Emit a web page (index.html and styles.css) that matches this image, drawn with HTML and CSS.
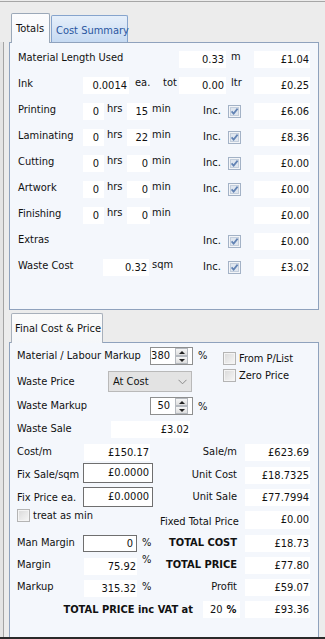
FILE: index.html
```html
<!DOCTYPE html>
<html>
<head>
<meta charset="utf-8">
<link rel="stylesheet" href="styles.css">
</head>
<body>
<div class="window">
  <div class="side"></div>
  <div class="main">
    <div class="tabs">
      <div class="tab sel">Totals</div>
      <div class="tab alt">Cost Summary</div>
    </div>
    <div class="panel p1">
      <div class="row">
        <div class="lbl w161">Material Length Used</div>
        <div class="box w47">0.33</div>
        <div class="unit w28">m</div>
        <div class="box price">£1.04</div>
      </div>
      <div class="row">
        <div class="lbl w65">Ink</div>
        <div class="box w46">0.0014</div>
        <div class="unit w34 pl6">ea.</div>
        <div class="unit w16">tot</div>
        <div class="box w47">0.00</div>
        <div class="unit w28">ltr</div>
        <div class="box price">£0.25</div>
      </div>
      <div class="row">
        <div class="lbl w65">Printing</div>
        <div class="box hb">0</div>
        <div class="unit hrs">hrs</div>
        <div class="box mb">15</div>
        <div class="unit mins">min</div>
        <div class="unit inc">Inc.</div>
        <svg class="cb" viewBox="0 0 13 13"><rect x=".5" y=".5" width="12" height="12" fill="#f3f5f8" stroke="#a3b2c6"/><rect x="2.5" y="2.5" width="8" height="8" fill="#dfe6ef" stroke="#c3cedc"/><path d="M3.6 6.4 L5.6 8.6 L9.6 3.6" fill="none" stroke="#6283b4" stroke-width="1.7"/></svg>
        <div class="box price">£6.06</div>
      </div>
      <div class="row">
        <div class="lbl w65">Laminating</div>
        <div class="box hb">0</div>
        <div class="unit hrs">hrs</div>
        <div class="box mb">22</div>
        <div class="unit mins">min</div>
        <div class="unit inc">Inc.</div>
        <svg class="cb" viewBox="0 0 13 13"><rect x=".5" y=".5" width="12" height="12" fill="#f3f5f8" stroke="#a3b2c6"/><rect x="2.5" y="2.5" width="8" height="8" fill="#dfe6ef" stroke="#c3cedc"/><path d="M3.6 6.4 L5.6 8.6 L9.6 3.6" fill="none" stroke="#6283b4" stroke-width="1.7"/></svg>
        <div class="box price">£8.36</div>
      </div>
      <div class="row">
        <div class="lbl w65">Cutting</div>
        <div class="box hb">0</div>
        <div class="unit hrs">hrs</div>
        <div class="box mb">0</div>
        <div class="unit mins">min</div>
        <div class="unit inc">Inc.</div>
        <svg class="cb" viewBox="0 0 13 13"><rect x=".5" y=".5" width="12" height="12" fill="#f3f5f8" stroke="#a3b2c6"/><rect x="2.5" y="2.5" width="8" height="8" fill="#dfe6ef" stroke="#c3cedc"/><path d="M3.6 6.4 L5.6 8.6 L9.6 3.6" fill="none" stroke="#6283b4" stroke-width="1.7"/></svg>
        <div class="box price">£0.00</div>
      </div>
      <div class="row">
        <div class="lbl w65">Artwork</div>
        <div class="box hb">0</div>
        <div class="unit hrs">hrs</div>
        <div class="box mb">0</div>
        <div class="unit mins">min</div>
        <div class="unit inc">Inc.</div>
        <svg class="cb" viewBox="0 0 13 13"><rect x=".5" y=".5" width="12" height="12" fill="#f3f5f8" stroke="#a3b2c6"/><rect x="2.5" y="2.5" width="8" height="8" fill="#dfe6ef" stroke="#c3cedc"/><path d="M3.6 6.4 L5.6 8.6 L9.6 3.6" fill="none" stroke="#6283b4" stroke-width="1.7"/></svg>
        <div class="box price">£0.00</div>
      </div>
      <div class="row">
        <div class="lbl w65">Finishing</div>
        <div class="box hb">0</div>
        <div class="unit hrs">hrs</div>
        <div class="box mb">0</div>
        <div class="unit mins">min</div>
        <div class="spacer51"></div>
        <div class="box price">£0.00</div>
      </div>
      <div class="row">
        <div class="lbl w185">Extras</div>
        <div class="unit inc">Inc.</div>
        <svg class="cb" viewBox="0 0 13 13"><rect x=".5" y=".5" width="12" height="12" fill="#f3f5f8" stroke="#a3b2c6"/><rect x="2.5" y="2.5" width="8" height="8" fill="#dfe6ef" stroke="#c3cedc"/><path d="M3.6 6.4 L5.6 8.6 L9.6 3.6" fill="none" stroke="#6283b4" stroke-width="1.7"/></svg>
        <div class="box price">£0.00</div>
      </div>
      <div class="row">
        <div class="lbl w85">Waste Cost</div>
        <div class="box w46">0.32</div>
        <div class="unit sqm">sqm</div>
        <div class="unit inc">Inc.</div>
        <svg class="cb" viewBox="0 0 13 13"><rect x=".5" y=".5" width="12" height="12" fill="#f3f5f8" stroke="#a3b2c6"/><rect x="2.5" y="2.5" width="8" height="8" fill="#dfe6ef" stroke="#c3cedc"/><path d="M3.6 6.4 L5.6 8.6 L9.6 3.6" fill="none" stroke="#6283b4" stroke-width="1.7"/></svg>
        <div class="box price">£3.02</div>
      </div>
    </div>

    <div class="tabs t2">
      <div class="tab sel fc">Final Cost &amp; Price</div>
    </div>
    <div class="panel p2">
      <div class="top">
        <div class="tleft">
          <div class="r r1">
            <div class="lbl w133">Material / Labour Markup</div>
            <div class="spin"><span class="sv">380</span><span class="btns"><span class="b up"></span><span class="b dn"></span></span></div>
            <div class="unit pct">%</div>
          </div>
          <div class="r r2">
            <div class="lbl w91">Waste Price</div>
            <div class="combo"><span>At Cost</span><svg class="chev" viewBox="0 0 9 6"><path d="M0.5 0.8 L4.5 4.8 L8.5 0.8" fill="none" stroke="#8a8a8a" stroke-width="1"/></svg></div>
          </div>
          <div class="r r3">
            <div class="lbl w133">Waste Markup</div>
            <div class="spin"><span class="sv">50</span><span class="btns"><span class="b up"></span><span class="b dn"></span></span></div>
            <div class="unit pct">%</div>
          </div>
          <div class="r r4">
            <div class="lbl w94">Waste Sale</div>
            <div class="box ws">£3.02</div>
          </div>
        </div>
        <div class="tright">
          <div class="chk"><span class="cb0"></span>From P/List</div>
          <div class="chk"><span class="cb0"></span>Zero Price</div>
        </div>
      </div>

      <div class="lrow h23">
        <div class="lp">
          <div class="lbl w66">Cost/m</div>
          <div class="box cm">£150.17</div>
        </div>
        <div class="rp">
          <div class="rl">Sale/m</div>
          <div class="box rb">£623.69</div>
        </div>
      </div>
      <div class="lrow h22">
        <div class="lp">
          <div class="lbl w66">Fix Sale/sqm</div>
          <div class="ed fx">£0.0000</div>
        </div>
        <div class="rp">
          <div class="rl">Unit Cost</div>
          <div class="box rb">£18.7325</div>
        </div>
      </div>
      <div class="lrow h24">
        <div class="lp">
          <div class="lbl w66">Fix Price ea.</div>
          <div class="ed fx">£0.0000</div>
        </div>
        <div class="rp">
          <div class="rl">Unit Sale</div>
          <div class="box rb">£77.7994</div>
        </div>
      </div>
      <div class="lrow h22 r8">
        <div class="lp">
          <div class="chk tam"><span class="cb0"></span>treat as min</div>
        </div>
        <div class="rp">
          <div class="rl">Fixed Total Price</div>
          <div class="box rb">£0.00</div>
        </div>
      </div>
      <div class="lrow h22">
        <div class="lp">
          <div class="lbl w66">Man Margin</div>
          <div class="ed mm">0</div>
          <div class="unit pc2">%</div>
        </div>
        <div class="rp">
          <div class="rl bold">TOTAL COST</div>
          <div class="box rb">£18.73</div>
        </div>
      </div>
      <div class="lrow h22">
        <div class="lp">
          <div class="lbl w66">Margin</div>
          <div class="box mg">75.92</div>
          <div class="unit pc2 sup">%</div>
        </div>
        <div class="rp">
          <div class="rl bold">TOTAL PRICE</div>
          <div class="box rb">£77.80</div>
        </div>
      </div>
      <div class="lrow h22">
        <div class="lp">
          <div class="lbl w66">Markup</div>
          <div class="box mg">315.32</div>
          <div class="unit pc2">%</div>
        </div>
        <div class="rp">
          <div class="rl">Profit</div>
          <div class="box rb">£59.07</div>
        </div>
      </div>
      <div class="lrow h22 vat">
        <div class="vl bold">TOTAL PRICE inc VAT at</div>
        <div class="box vb"><span>20</span><b>%</b></div>
        <div class="box rb">£93.36</div>
      </div>
    </div>
  </div>
  <div class="rside"></div>
</div>
</body>
</html>
```
FILE: styles.css
```css
html, body {
  margin: 0;
  padding: 0;
  background: #ececec;
}
body {
  font-family: "DejaVu Sans Condensed", "DejaVu Sans", sans-serif;
  font-stretch: condensed;
  font-size: 11px;
  color: #111;
}
.window {
  margin-top: 1px;
  height: 638px;
  box-sizing: border-box;
  border-top: 1px solid #a6a6a6;
  border-bottom: 2px solid #2a2a2a;
  display: flex;
  background: #ececec;
}
.side {
  width: 3px;
  margin-top: 40px;
  border-right: 1px solid #a4a4a4;
  background: #e4e4e4;
}
.main {
  margin-left: 5px;
  width: 310px;
  display: flex;
  flex-direction: column;
}
.rside {
  flex: 1;
}
.tabs {
  display: flex;
  align-items: flex-end;
  height: 29px;
  margin-top: 11px;
  padding-left: 2px;
}
.tabs.t2 {
  margin-top: 3px;
}
.tab {
  box-sizing: border-box;
  border: 1px solid #9ba8b8;
  border-bottom: none;
  border-radius: 2px 2px 0 0;
  padding-left: 4px;
  white-space: nowrap;
}
.tab.sel {
  width: 39px;
  height: 30px;
  margin-bottom: -1px;
  padding-top: 8px;
  background: linear-gradient(#fcfcfd, #f4f7fc);
  position: relative;
  z-index: 1;
}
.tab.alt {
  width: 77px;
  height: 27px;
  margin-left: 1px;
  padding-top: 8px;
  border-color: #86a4cd;
  background: linear-gradient(#e6effa, #c6daf2);
  color: #2a56a0;
}
.tab.fc {
  width: 92px;
  background: linear-gradient(#fbfbfb, #f5f7fa);
  border-color: #a8b0bb;
  padding-left: 3px;
}
.panel {
  box-sizing: border-box;
  border: 1px solid #8fa2bd;
  background: #f4f7fc;
}
.p1 {
  height: 268px;
  padding: 2px 0 0 8px;
}
.p2 {
  flex: 1;
  border-bottom: none;
  padding: 0 0 0 7px;
}
.row {
  display: flex;
  align-items: flex-start;
  height: 26px;
}
.lbl {
  margin-top: 6px;
  line-height: 14px;
  white-space: nowrap;
  flex-shrink: 0;
}
.unit {
  margin-top: 5px;
  line-height: 14px;
  white-space: nowrap;
  flex-shrink: 0;
}
.box {
  box-sizing: border-box;
  margin-top: 6px;
  height: 17px;
  line-height: 18px;
  background: #fff;
  text-align: right;
  padding-right: 2px;
  white-space: nowrap;
  flex-shrink: 0;
}
.w161 { width: 161px; }
.w65 { width: 65px; }
.w66 { width: 66px; }
.w85 { width: 85px; }
.w185 { width: 185px; }
.w133 { width: 133px; }
.w91 { width: 91px; }
.w94 { width: 94px; }
.w47 { width: 47px; }
.w46 { width: 46px; }
.w28 { width: 28px; padding-left: 5px; box-sizing: border-box; }
.w34 { width: 34px; box-sizing: border-box; }
.w16 { width: 16px; }
.pl6 { padding-left: 6px; }
.hb { width: 21px; padding-right: 5px; }
.mb { width: 23px; padding-right: 2px; }
.hrs { width: 23px; padding-left: 3px; box-sizing: border-box; }
.mins { width: 53px; padding-left: 2px; box-sizing: border-box; }
.sqm { width: 54px; padding-left: 3px; box-sizing: border-box; }
.inc { width: 25px; margin-top: 7px; }
.spacer51 { width: 51px; flex-shrink: 0; }
.cb {
  width: 13px;
  height: 13px;
  margin-top: 8px;
  margin-right: 13px;
  flex-shrink: 0;
}
.price {
  width: 56px;
  padding-right: 1px;
}

/* panel 2 */
.top {
  display: flex;
}
.tleft {
  width: 206px;
}
.r {
  display: flex;
  align-items: flex-start;
}
.r1 { height: 26px; }
.r2 { height: 26px; }
.r3 { height: 23px; }
.r4 { height: 22px; }
.r1 .lbl { margin-top: 6px; }
.r2 .lbl { margin-top: 6px; }
.r3 .lbl { margin-top: 4px; }
.r4 .lbl { margin-top: 4px; }
.spin {
  box-sizing: border-box;
  width: 43px;
  height: 18px;
  margin-top: 4px;
  border: 1px solid #8e8f8f;
  background: #fff;
  display: flex;
  align-items: stretch;
}
.r3 .spin { margin-top: 2px; }
.sv {
  flex: 1;
  text-align: right;
  line-height: 16px;
  padding-right: 5px;
}
.btns {
  width: 13px;
  margin: 0 4px 0 0;
  display: flex;
  flex-direction: column;
}
.b {
  flex: 1;
  box-sizing: border-box;
  border: 1px solid #b5b9bf;
  background: linear-gradient(#f6f6f6, #dedede);
  display: flex;
  align-items: center;
  justify-content: center;
}
.b.up::before {
  content: "";
  border-left: 3px solid transparent;
  border-right: 3px solid transparent;
  border-bottom: 3px solid #222;
}
.b.dn::before {
  content: "";
  border-left: 3px solid transparent;
  border-right: 3px solid transparent;
  border-top: 3px solid #222;
}
.pct { margin-top: 6px; padding-left: 5px; }
.r3 .pct { margin-top: 5px; }
.combo {
  box-sizing: border-box;
  width: 84px;
  height: 21px;
  margin-top: 2px;
  border: 1px solid #b9b9b9;
  background: #e3e3e3;
  display: flex;
  align-items: center;
  justify-content: space-between;
  padding: 0 4px 0 4px;
}
.chev {
  width: 9px;
  height: 6px;
}
.ws {
  width: 79px;
  margin-top: 3px;
  padding-right: 1px;
}
.tright {
  padding-top: 7px;
}
.chk {
  display: flex;
  align-items: center;
  height: 17px;
  white-space: nowrap;
}
.cb0 {
  box-sizing: border-box;
  width: 13px;
  height: 13px;
  border: 1px solid #b4b4b4;
  background: linear-gradient(135deg, #d9d9d9, #f7f7f7);
  box-shadow: inset 0 0 0 1px #f4f4f4;
  margin-right: 3px;
  flex-shrink: 0;
}
.lrow {
  display: flex;
  align-items: flex-start;
}
.h23 { height: 23px; }
.h22 { height: 22px; }
.h24 { height: 24px; }
.lp {
  width: 143px;
  display: flex;
  align-items: flex-start;
  flex-shrink: 0;
}
.rp {
  display: flex;
  align-items: flex-start;
}
.rl {
  width: 77px;
  text-align: right;
  margin-top: 5px;
  line-height: 14px;
  white-space: nowrap;
}
.rb {
  width: 65px;
  margin-left: 8px;
  margin-top: 4px;
  padding-right: 1px;
}
.lrow .lbl { margin-top: 5px; }
.cm {
  width: 66px;
  margin-left: 1px;
  margin-top: 4px;
  padding-right: 1px;
}
.ed {
  box-sizing: border-box;
  border: 1px solid #6f6f6f;
  background: #fff;
  text-align: right;
  padding-right: 3px;
  flex-shrink: 0;
}
.fx {
  width: 70px;
  height: 20px;
  line-height: 18px;
  margin-top: 0;
}
.h24 .fx { margin-top: 2px; }
.h24 .lbl { margin-top: 6px; }
.tam {
  margin-top: -2px;
  height: 17px;
}
.r8 .rl { margin-top: 6px; }
.r8 .rb { margin-top: 2px; height: 18px; }
.mm {
  width: 54px;
  height: 17px;
  line-height: 16px;
  margin-top: 4px;
}
.pc2 { padding-left: 5px; margin-top: 5px; }
.mg {
  width: 53px;
  margin-left: 1px;
  margin-top: 5px;
  padding-right: 1px;
}
.sup { margin-top: 0; }
.bold { font-weight: bold; }
.vat {
  padding-top: 1px;
}
.vl {
  width: 176px;
  text-align: right;
  margin-top: 5px;
  line-height: 14px;
  white-space: nowrap;
}
.vb {
  width: 37px;
  margin-left: 10px;
  margin-top: 3px;
  text-align: left;
  padding-left: 7px;
}
.vb b { margin-left: 4px; }
.vat .rb { margin-left: 5px; margin-top: 3px; }
```
